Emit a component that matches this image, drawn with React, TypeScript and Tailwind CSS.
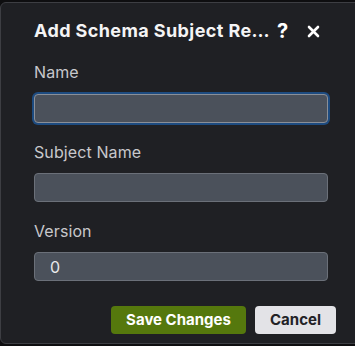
import React from "react";

export default function App() {
  return (
    <div className="w-[355px] h-[346px] overflow-hidden bg-[#0e0e10] pt-[2px]" style={{ fontFamily: "Inter, 'Noto Sans', sans-serif" }}>
      <div className="w-[370px] h-[342px] rounded-[6px] border border-[#3d3e43] bg-[#1f2024] pt-[15px] pl-[33px]">
        <div className="flex items-center h-[26px] w-[294px]">
          <div className="text-[18px] font-bold text-[#f4f4f5] leading-[26px] tracking-[0.4px] w-[242px] whitespace-nowrap">Add Schema Subject Re…</div>
          <div className="ml-[1px] text-[20px] font-bold text-white leading-[26px]">?</div>
          <svg className="ml-[19px]" width="13" height="13" viewBox="0 0 13 13">
            <path d="M2 2 L11 11 M11 2 L2 11" stroke="#fff" strokeWidth="2.6" strokeLinecap="round" />
          </svg>
        </div>
        <div className="mt-[18px] text-[16px] leading-[20px] tracking-[0.1px] text-[#c8c8cc]">Name</div>
        <div className="mt-[12px] w-[294px] h-[29px] rounded-[4px] border border-[#8a8f98] bg-[#4b515b] ring-[2px] ring-[#1d4b80]"></div>
        <div className="mt-[19px] text-[16px] leading-[20px] tracking-[0.1px] text-[#c8c8cc]">Subject Name</div>
        <div className="mt-[11px] w-[294px] h-[29px] rounded-[4px] border border-[#6b7079] bg-[#4b515b]"></div>
        <div className="mt-[19px] text-[16px] leading-[20px] tracking-[0.1px] text-[#c8c8cc]">Version</div>
        <div className="mt-[11px] w-[294px] h-[29px] rounded-[4px] border border-[#6b7079] bg-[#4b515b] flex items-center pl-[15px] text-[16px] text-[#e8e8ea]">0</div>
        <div className="mt-[25px] flex w-[302px] justify-end gap-[9px]">
          <button className="h-[28px] w-[135px] rounded-[4px] bg-[#55780d] text-[15px] font-bold text-white">Save Changes</button>
          <button className="h-[28px] w-[81px] rounded-[4px] bg-[#e3e3e7] text-[15px] font-bold text-[#222226]">Cancel</button>
        </div>
      </div>
    </div>
  );
}
